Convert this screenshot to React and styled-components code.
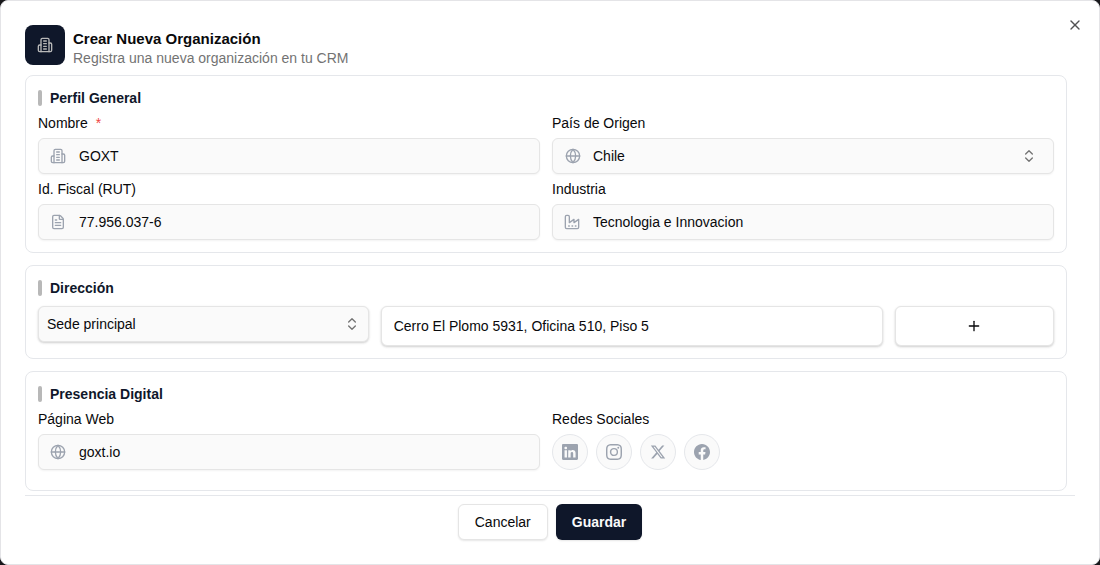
import React, { useState } from 'react'
import styled, { createGlobalStyle } from 'styled-components'
import { ChevronsUpDown, FileText, Globe, Plus, X } from 'lucide-react'
import { BsFacebook, BsInstagram, BsLinkedin } from 'react-icons/bs'
import { FaXTwitter } from 'react-icons/fa6'

const GlobalStyle = createGlobalStyle`
* {
    box-sizing: border-box;
}
body {
    margin: 0;
    background: #18181b;
    color: #09090b;
    font-family: "Liberation Sans", Arial, sans-serif;
    font-size: 14px;
    line-height: 20px;
}
button, input, select {
    font: inherit;
    color: inherit;
}
`

const Modal = styled.div`
position: relative;
display: flex;
flex-direction: column;
min-height: 100vh;
padding: 24px;
background: #fff;
border: 1px solid #e4e4e7;
border-radius: 8px;
`

const CloseButton = styled.button`
position: absolute;
top: 16px;
right: 16px;
display: flex;
padding: 0;
border: none;
background: none;
opacity: 0.7;
cursor: pointer;
`

const Header = styled.header`
display: flex;
gap: 8px;
margin-bottom: 8px;
`

const HeaderIcon = styled.div`
display: flex;
align-items: center;
justify-content: center;
width: 40px;
height: 40px;
border-radius: 8px;
background: #0f172a;
color: #b8b8b8;
`

const HeaderText = styled.div`
padding-top: 4px;
h2 {
    margin: 0;
    font-size: 15px;
    line-height: 20px;
    font-weight: 600;
}
p {
    margin: 0;
    line-height: 18px;
    color: #737373;
}
`

const Form = styled.form`
display: flex;
flex-direction: column;
flex: 1;
`

const Sections = styled.div`
display: flex;
flex-direction: column;
gap: 12px;
flex: 1;
padding: 0 8px 4px 0;
`

const Card = styled.section`
padding: 12px;
padding-bottom: ${props => props.$roomy ? '20px' : '12px'};
border: 1px solid #e5e7eb;
border-radius: 8px;
`

const CardTitle = styled.h3`
display: flex;
align-items: center;
gap: 8px;
margin: 0 0 8px;
color: #0f172a;
font-size: 14px;
line-height: 20px;
font-weight: 600;
&::before {
    content: '';
    width: 4px;
    height: 16px;
    border-radius: 2px;
    background: #b8b8b8;
}
`

const FieldGrid = styled.div`
display: grid;
grid-template-columns: 1fr 1fr;
gap: 8px 12px;
`

const AddressGrid = styled.div`
display: grid;
grid-template-columns: repeat(12, 1fr);
align-items: start;
gap: 12px;
`

const AddressCell = styled.div`
grid-column: span ${props => props.$span};
display: grid;
`

const Field = styled.div`
display: flex;
flex-direction: column;
gap: 8px;
min-width: 0;
`

const Label = styled.label`
line-height: 14px;
span {
    margin-left: 4px;
    color: #ef4444;
}
`

const Control = styled.div`
display: flex;
align-items: center;
height: ${props => props.$tall ? '40px' : '36px'};
padding: 0 ${props => props.$pad || '11px'};
border: 1px solid #e5e5e5;
border-radius: 6px;
background: ${props => props.$white ? '#fff' : '#fafafa'};
box-shadow: ${props => props.$raised
    ? '0 1px 3px rgba(0, 0, 0, 0.1), 0 1px 2px rgba(0, 0, 0, 0.1)'
    : '0 1px 2px rgba(0, 0, 0, 0.05)'};
> svg {
    flex-shrink: 0;
    color: #9ca3af;
}
> svg:last-child {
    color: #737373;
    pointer-events: none;
}
input, select {
    flex: 1;
    min-width: 0;
    height: 100%;
    padding: 0;
    border: none;
    outline: none;
    background: transparent;
}
select {
    appearance: none;
    margin-right: -16px;
    padding-right: 16px;
}
> svg + input {
    margin-left: 13px;
}
> svg + select {
    margin-left: 12px;
}
&:focus-within {
    border-color: #94a3b8;
}
`

const Socials = styled.div`
display: flex;
gap: 8px;
`

const SocialButton = styled.button`
display: flex;
align-items: center;
justify-content: center;
width: 36px;
height: 36px;
padding: 0;
border: 1px solid #e5e7eb;
border-radius: 50%;
background: #fafafa;
color: #9ca3af;
cursor: pointer;
`

const Button = styled.button`
display: flex;
align-items: center;
justify-content: center;
height: ${props => props.$tall ? '40px' : '36px'};
padding: 0 16px;
border: ${props => props.$primary ? 'none' : '1px solid #e5e5e5'};
border-radius: 6px;
background: ${props => props.$primary ? '#0f172a' : '#fff'};
color: ${props => props.$primary ? '#fafafa' : '#09090b'};
font-weight: ${props => props.$primary ? 600 : 400};
box-shadow: ${props => props.$tall
    ? '0 1px 3px rgba(0, 0, 0, 0.1), 0 1px 2px rgba(0, 0, 0, 0.1)'
    : '0 1px 2px rgba(0, 0, 0, 0.1)'};
cursor: pointer;
`

const Footer = styled.footer`
display: flex;
justify-content: center;
gap: 8px;
padding-top: 8px;
border-top: 1px solid #e5e7eb;
`

const LineIcon = ({ children }) => (
    <svg width='16' height='16' viewBox='0 0 24 24' fill='none' stroke='currentColor' strokeWidth='2' strokeLinecap='round' strokeLinejoin='round' aria-hidden='true'>
        {children}
    </svg>
)

const BuildingIcon = () => (
    <LineIcon>
        <path d='M6 22V4a2 2 0 0 1 2-2h8a2 2 0 0 1 2 2v18Z' />
        <path d='M6 12H4a2 2 0 0 0-2 2v6a2 2 0 0 0 2 2h2' />
        <path d='M18 9h2a2 2 0 0 1 2 2v9a2 2 0 0 1-2 2h-2' />
        <path d='M10 6h4M10 10h4M10 14h4M10 18h4' />
    </LineIcon>
)

const FactoryIcon = () => (
    <LineIcon>
        <path d='M2 20a2 2 0 0 0 2 2h16a2 2 0 0 0 2-2V8l-7 5V8l-7 5V4a2 2 0 0 0-2-2H4a2 2 0 0 0-2 2Z' />
        <path d='M17 18h1M12 18h1M7 18h1' />
    </LineIcon>
)

const socials = [
    { name: 'LinkedIn', Icon: BsLinkedin },
    { name: 'Instagram', Icon: BsInstagram },
    { name: 'X', Icon: FaXTwitter },
    { name: 'Facebook', Icon: BsFacebook },
]

export default function App() {
    const [values, setValues] = useState({
        nombre: 'GOXT',
        pais: 'Chile',
        rut: '77.956.037-6',
        industria: 'Tecnologia e Innovacion',
        sede: 'Sede principal',
        direccion: 'Cerro El Plomo 5931, Oficina 510, Piso 5',
        web: 'goxt.io',
    })

    const bind = name => ({
        id: name,
        name,
        value: values[name],
        onChange: e => setValues({ ...values, [name]: e.target.value }),
    })

    return (
        <>
            <GlobalStyle />
            <Modal role='dialog' aria-labelledby='dialog-title'>
                <Header>
                    <HeaderIcon><BuildingIcon /></HeaderIcon>
                    <HeaderText>
                        <h2 id='dialog-title'>Crear Nueva Organización</h2>
                        <p>Registra una nueva organización en tu CRM</p>
                    </HeaderText>
                </Header>

                <Form onSubmit={e => e.preventDefault()}>
                    <Sections>
                        <Card>
                            <CardTitle>Perfil General</CardTitle>
                            <FieldGrid>
                                <Field>
                                    <Label htmlFor='nombre'>Nombre <span>*</span></Label>
                                    <Control><BuildingIcon /><input {...bind('nombre')} required /></Control>
                                </Field>
                                <Field>
                                    <Label htmlFor='pais'>País de Origen</Label>
                                    <Control $pad='16px 0 12px'>
                                        <Globe size={16} />
                                        <select {...bind('pais')}><option>Chile</option></select>
                                        <ChevronsUpDown size={16} />
                                    </Control>
                                </Field>
                                <Field>
                                    <Label htmlFor='rut'>Id. Fiscal (RUT)</Label>
                                    <Control><FileText size={16} /><input {...bind('rut')} /></Control>
                                </Field>
                                <Field>
                                    <Label htmlFor='industria'>Industria</Label>
                                    <Control><FactoryIcon /><input {...bind('industria')} /></Control>
                                </Field>
                            </FieldGrid>
                        </Card>

                        <Card>
                            <CardTitle>Dirección</CardTitle>
                            <AddressGrid>
                                <AddressCell $span={4}>
                                    <Control $raised $pad='8px'>
                                        <select {...bind('sede')} aria-label='Tipo de sede'><option>Sede principal</option></select>
                                        <ChevronsUpDown size={16} />
                                    </Control>
                                </AddressCell>
                                <AddressCell $span={6}>
                                    <Control $raised $white $tall $pad='12px'>
                                        <input {...bind('direccion')} aria-label='Dirección' />
                                    </Control>
                                </AddressCell>
                                <AddressCell $span={2}>
                                    <Button type='button' $tall aria-label='Agregar dirección'><Plus size={16} /></Button>
                                </AddressCell>
                            </AddressGrid>
                        </Card>

                        <Card $roomy>
                            <CardTitle>Presencia Digital</CardTitle>
                            <FieldGrid>
                                <Field>
                                    <Label htmlFor='web'>Página Web</Label>
                                    <Control><Globe size={16} /><input {...bind('web')} /></Control>
                                </Field>
                                <Field>
                                    <Label as='div'>Redes Sociales</Label>
                                    <Socials>
                                        {socials.map(({ name, Icon }) => (
                                            <SocialButton key={name} type='button' aria-label={name}><Icon size={16} /></SocialButton>
                                        ))}
                                    </Socials>
                                </Field>
                            </FieldGrid>
                        </Card>
                    </Sections>

                    <Footer>
                        <Button type='button'>Cancelar</Button>
                        <Button type='submit' $primary>Guardar</Button>
                    </Footer>
                </Form>

                <CloseButton type='button' aria-label='Cerrar'><X size={16} /></CloseButton>
            </Modal>
        </>
    )
}
